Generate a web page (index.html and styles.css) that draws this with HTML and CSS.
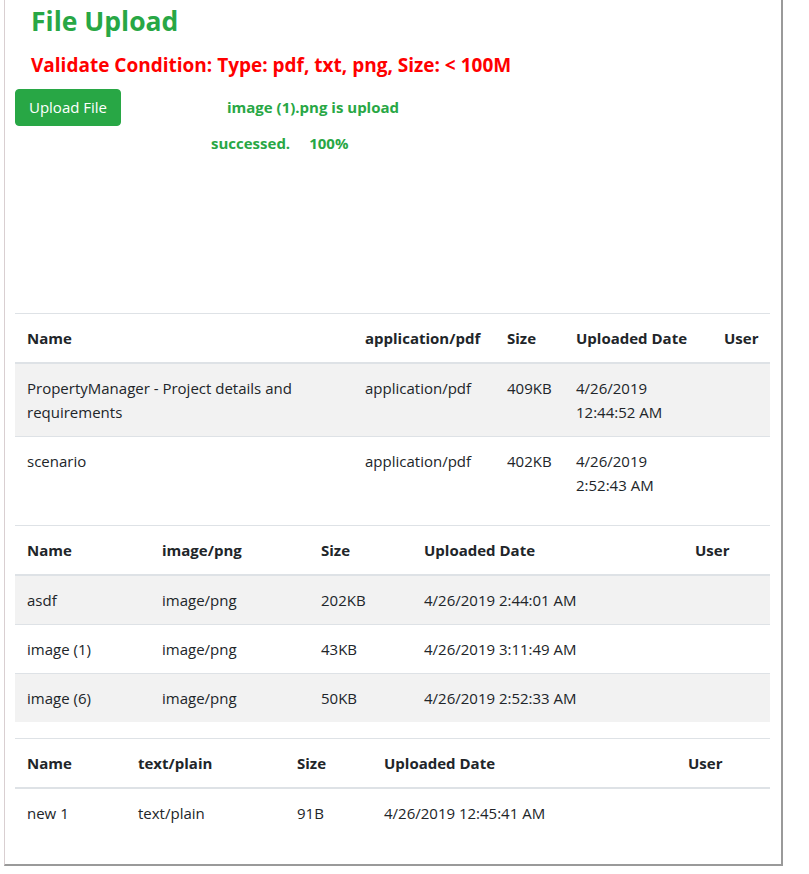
FILE: index.html
```html
<!DOCTYPE html>
<html>
<head>
<meta charset="utf-8">
<link rel="stylesheet" href="styles.css">
</head>
<body>
<div class="frame">
  <h3 class="title">File Upload</h3>
  <h5 class="condition">Validate Condition: Type: pdf, txt, png, Size: &lt; 100M</h5>
  <div class="upload-row">
    <button class="btn-upload">Upload File</button>
    <div class="status">
      <div class="status-line1">image (1).png is upload</div>
      <div class="status-line2"><span class="succ">successed.</span><span>100%</span></div>
    </div>
  </div>

  <table class="tbl t1">
    <colgroup><col class="c1"><col class="c2"><col class="c3"><col class="c4"><col class="c5"></colgroup>
    <thead><tr><th>Name</th><th>application/pdf</th><th>Size</th><th>Uploaded Date</th><th>User</th></tr></thead>
    <tbody>
      <tr class="odd"><td>PropertyManager - Project details and requirements</td><td>application/pdf</td><td>409KB</td><td>4/26/2019 12:44:52 AM</td><td></td></tr>
      <tr><td>scenario</td><td>application/pdf</td><td>402KB</td><td>4/26/2019 2:52:43 AM</td><td></td></tr>
    </tbody>
  </table>

  <table class="tbl t2">
    <colgroup><col class="c1"><col class="c2"><col class="c3"><col class="c4"><col class="c5"></colgroup>
    <thead><tr><th>Name</th><th>image/png</th><th>Size</th><th>Uploaded Date</th><th>User</th></tr></thead>
    <tbody>
      <tr class="odd"><td>asdf</td><td>image/png</td><td>202KB</td><td>4/26/2019 2:44:01 AM</td><td></td></tr>
      <tr><td>image (1)</td><td>image/png</td><td>43KB</td><td>4/26/2019 3:11:49 AM</td><td></td></tr>
      <tr class="odd"><td>image (6)</td><td>image/png</td><td>50KB</td><td>4/26/2019 2:52:33 AM</td><td></td></tr>
    </tbody>
  </table>

  <table class="tbl t3">
    <colgroup><col class="c1"><col class="c2"><col class="c3"><col class="c4"><col class="c5"></colgroup>
    <thead><tr><th>Name</th><th>text/plain</th><th>Size</th><th>Uploaded Date</th><th>User</th></tr></thead>
    <tbody>
      <tr><td>new 1</td><td>text/plain</td><td>91B</td><td>4/26/2019 12:45:41 AM</td><td></td></tr>
    </tbody>
  </table>
</div>
</body>
</html>
```

FILE: styles.css
```css
html, body {
  margin: 0;
  padding: 0;
  background: #fff;
}
body {
  font-family: "Segoe UI", "Open Sans", "Noto Sans", sans-serif;
  font-size: 15px;
  line-height: 24px;
  color: #212529;
}
.frame {
  margin-left: 4px;
  width: 755px;
  border-left: 1px solid #d9cfd1;
  border-right: 2px solid #9a9a9a;
  border-bottom: 2px solid #9a9a9a;
  padding: 0 11px 11px 10px;
}
.title {
  margin: 0;
  padding: 6px 0 0 16px;
  font-size: 26.5px;
  font-weight: 700;
  line-height: 1.2;
  color: #28a745;
}
.condition {
  margin: 16px 0 0 16px;
  font-size: 19px;
  font-weight: 700;
  line-height: 1.2;
  color: #ff0000;
}
.upload-row {
  display: flex;
  align-items: flex-start;
  margin-top: 12px;
  height: 224px;
}
.btn-upload {
  font-family: inherit;
  font-size: 15px;
  line-height: 24px;
  white-space: nowrap;
  color: #fff;
  background: #28a745;
  border: 1px solid #28a745;
  border-radius: 4px;
  padding: 5px 8px;
  width: 106px;
  height: 37px;
  cursor: pointer;
}
.status {
  font-size: 15px;
  font-weight: 700;
  color: #28a745;
  line-height: 36px;
}
.status-line1 { margin-left: 106px; }
.status-line2 { margin-left: 90px; display: flex; gap: 19px; }

.tbl {
  width: 100%;
  border-collapse: collapse;
  table-layout: fixed;
  margin-bottom: 16px;
}
.tbl th, .tbl td {
  padding: 12px;
  text-align: left;
  vertical-align: top;
  border-top: 1px solid #dee2e6;
}
.tbl th {
  font-weight: 700;
  border-bottom: 2px solid #dee2e6;
}
.tbl tr.odd td { background: #f2f2f2; }

.t1 .c1 { width: 338px; }
.t1 .c2 { width: 142px; }
.t1 .c3 { width: 69px; }
.t1 .c4 { width: 148px; }
.t1 .c5 { width: 58px; }

.t2 .c1 { width: 135px; }
.t2 .c2 { width: 159px; }
.t2 .c3 { width: 103px; }
.t2 .c4 { width: 271px; }
.t2 .c5 { width: 87px; }

.t3 .c1 { width: 111px; }
.t3 .c2 { width: 159px; }
.t3 .c3 { width: 87px; }
.t3 .c4 { width: 304px; }
.t3 .c5 { width: 94px; }
```
